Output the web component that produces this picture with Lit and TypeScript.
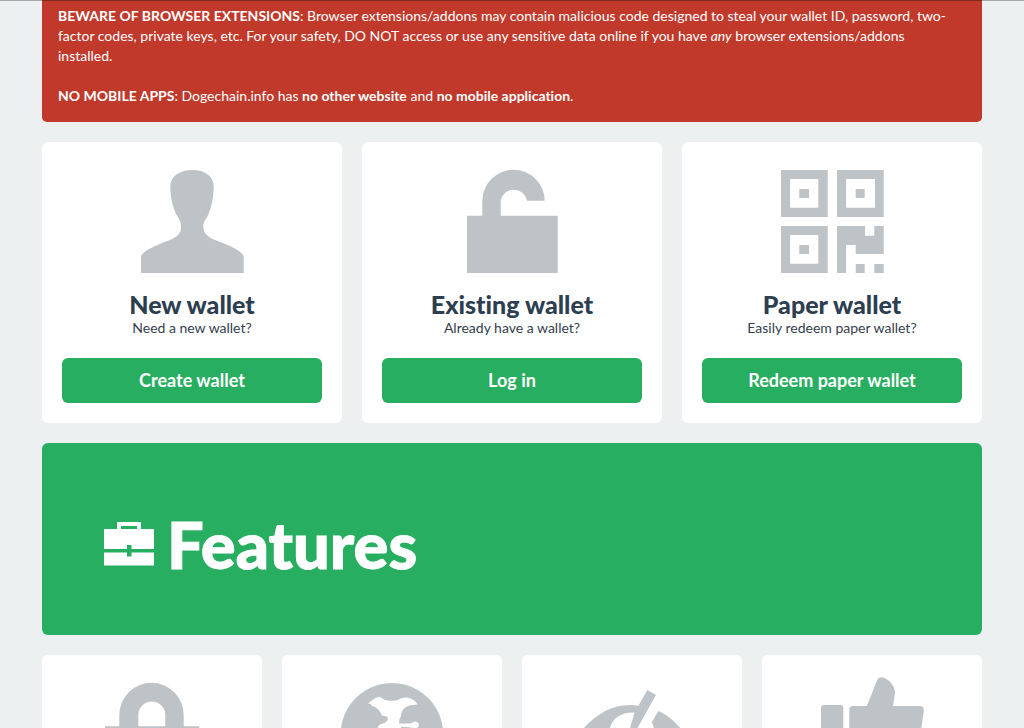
import { LitElement, html, css, svg } from "lit";
import { customElement, property } from "lit/decorators.js";

const SHAPES: Record<string, unknown> = {
  user: svg`<path d="M52.3 0C65 0 73.7 6 73.7 17C73.7 27 71 41 66.500 48C64 52 63.300 53 63.300 57C63.500 66 72 69 84 73.500C94 77.500 101 81 103.700 86V103H1V86C4 81 11 77.500 21 73.500C33 69 41 66 41 58C41 53 40.500 51.500 38.500 48C33 40 30.300 27 30.300 16C30.500 6 40 0 52.300 0Z"/>`,
  unlock: svg`<path d="M7 45.700H22.300V31.200A31.200 31.200 0 0 1 84.700 30.700H67A13.300 13.300 0 0 0 40.700 31.200V45.700H97.700V103H7Z"/>`,
  qr: svg`<path fill-rule="evenodd" d="M1 0H47.700V47H1ZM10 9V37.700H38.300V9ZM19.300 19H29V28H19.300Z
    M57 0H103.700V47H57ZM66 9V37.700H95V9ZM75.700 19H84.700V28H75.700Z
    M1 56H47.700V103H1ZM10 65V93.700H38.300V65ZM19.300 75H29V84H19.300Z
    M57 56H85V65.700H94.300V56H103.700V84H75.700V75H66V103H57ZM75.700 94H84.700V103H75.700ZM94.300 94H103.700V103H94.300Z"/>`,
  lock: svg`<path d="M5 43.300H19.300V32A32.200 32.200 0 0 1 83.700 32V43.300H99.300V103H5ZM38.300 43.300H65.300V32A13.500 13.500 0 0 0 38.300 32Z"/>`,
  globe: svg`<path fill-rule="evenodd" d="M52 0A51.300 51.300 0 1 1 51.900 0ZM27.700 20.500C32 18 34 14.500 40 13.700C44 17.500 48 17.700 54 17.700C59 17.500 61 14 66 14.500C72 15 75 17.500 77.700 21.500C71 22 67 22.500 64 25.500C60 30 62 33 59.500 36L59 40.500H69C72 40.500 73 38.500 76 38.500C80 40 79.500 43 77 44.700C73 45.500 67 43.500 61 43.800L66 62L48 90L34 60L38 44C40 40 44 41 47 38C49.500 35 47 32.500 42 32.700C40 28 37 24 32 23C30.500 20.500 29 20.500 27.700 20.500Z"/>`,
  eye: svg`<path fill-rule="evenodd" d="M-1 51C13 33 30 22 50 22C53 22 56 22.300 58.300 23L67.300 7L76 12L34 87L25 82L29 74C16 69 6 60 -1 51ZM40 45H50L54.500 29.700C45 29 33 33 30 45C29.500 53 33 60 38 64L44 54C39 52 39 48 40 45Z"/><path fill="#fff" d="M40 45.500C42 41 45 39.500 50 38.500L46.500 45L43 51Z"/><path d="M78.300 28C88 32 97 40 105 51C94 67 79 77 57 79L73 50Q75 44 71.700 39.500Z"/>`,
  thumb: svg`<rect x="1" y="22" width="22.300" height="70" rx="3"/><path d="M33 23H46.700C51 14 53.500 5 57.300 -3C58.500 -6 61.500 -6.500 64.500 -5C71 -2 75 4 75 10L73 23H100C103 23 104 25 103.700 28.500L96 84Q94 92 86 92H37Q29.300 92 29.300 85V27Q29.300 23 33 23Z"/>`,
};

@customElement("wallet-icon")
export class WalletIcon extends LitElement {
  static styles = css`
    :host { display: block; width: 104px; height: 104px; }
    .glyph { display: block; width: 100%; height: 100%; overflow: visible; fill: #bdc3c7; }
  `;
  @property() name = "user";
  render() {
    return html`<svg class="glyph" viewBox="0 0 104 104" aria-hidden="true">${SHAPES[this.name]}</svg>`;
  }
}

const WALLETS = [
  { icon: "user", title: "New wallet", text: "Need a new wallet?", action: "Create wallet" },
  { icon: "unlock", title: "Existing wallet", text: "Already have a wallet?", action: "Log in" },
  { icon: "qr", title: "Paper wallet", text: "Easily redeem paper wallet?", action: "Redeem paper wallet" },
];
const FEATURES = ["lock", "globe", "eye", "thumb"];

@customElement("app-root")
export class AppRoot extends LitElement {
  static styles = css`
    :host {
      display: block;
      box-sizing: border-box;
      height: 100vh;
      overflow: hidden;
      background: #ecf0f1;
      color: #34495e;
      font: 14px/20px Lato, sans-serif;
      font-variant-ligatures: none;
      box-shadow: inset 0 1px rgba(0, 0, 0, 0.3);
    }
    .page {
      display: flex;
      flex-direction: column;
      gap: 20px;
      max-width: 940px;
      margin: 0 auto;
    }
    .warning {
      padding: 6px 32px 16px 16px;
      border-radius: 0 0 5px 5px;
      background: #c0392b;
      box-shadow: inset 0 1px rgba(0, 0, 0, 0.3);
      color: #fff;
    }
    .warning p { margin: 0; }
    .warning p + p { margin-top: 20px; }
    .wallets, .features { display: grid; gap: 20px; }
    .wallets { grid-template-columns: repeat(3, 1fr); }
    .features { grid-template-columns: repeat(4, 1fr); }
    .card {
      display: flex;
      flex-direction: column;
      align-items: center;
      padding: 28px 20px 20px;
      border-radius: 6px;
      background: #fff;
      text-align: center;
    }
    .title {
      margin: 18px 0 2px;
      color: #2c3e50;
      font-size: 25px;
      line-height: 24px;
      font-weight: 900;
    }
    .text { margin: 0 0 20px; color: #34404c; }
    .action {
      width: 100%;
      padding: 12px;
      border: 0;
      border-radius: 6px;
      background: #27ae60;
      color: #fff;
      font: 700 18px/21px Lato, sans-serif;
      font-variant-ligatures: none;
      cursor: pointer;
    }
    .banner {
      display: flex;
      align-items: center;
      gap: 13px;
      padding: 73px 62px 63px;
      border-radius: 6px;
      background: #27ae60;
      color: #fff;
    }
    .case { width: 50px; height: 44px; fill: currentColor; }
    .heading {
      margin: 0;
      font-size: 65px;
      line-height: 56px;
      font-weight: 900;
      -webkit-text-stroke: 1px currentColor;
    }
  `;

  render() {
    return html`
      <main class="page">
        <section class="warning">
          <p><b>BEWARE OF BROWSER EXTENSIONS</b>: Browser extensions/addons may contain malicious code designed to steal your wallet ID, password, two-factor codes, private keys, etc. For your safety, DO NOT access or use any sensitive data online if you have <em>any</em> browser extensions/addons installed.</p>
          <p><b>NO MOBILE APPS</b>: Dogechain.info has <b>no other website</b> and <b>no mobile application</b>.</p>
        </section>
        <section class="wallets">
          ${WALLETS.map((w) => html`
            <article class="card">
              <wallet-icon name=${w.icon}></wallet-icon>
              <h2 class="title">${w.title}</h2>
              <p class="text">${w.text}</p>
              <button class="action" type="button">${w.action}</button>
            </article>`)}
        </section>
        <header class="banner">
          <svg class="case" viewBox="0 0 50 44" aria-hidden="true">
            <path fill-rule="evenodd" d="M13 7V0H37V7H50V27H27.500V23H23V27H0V7ZM17 7H33V4H17ZM0 30.500H23V34.500H27.500V30.500H50V43.500H0Z"/>
          </svg>
          <h1 class="heading">Features</h1>
        </header>
        <section class="features">
          ${FEATURES.map((name) => html`<article class="card"><wallet-icon name=${name}></wallet-icon></article>`)}
        </section>
      </main>
    `;
  }
}
